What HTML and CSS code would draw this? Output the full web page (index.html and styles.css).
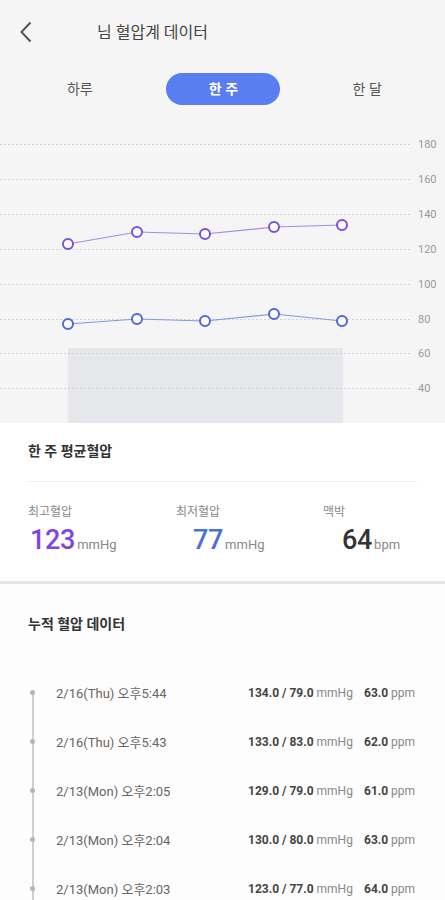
FILE: index.html
```html
<!DOCTYPE html>
<html lang="ko">
<head>
<meta charset="utf-8">
<title>혈압계 데이터</title>
<link rel="stylesheet" href="styles.css">
</head>
<body>
<div class="top">
  <header class="header">
    <svg class="back" width="14" height="22" viewBox="0 0 14 22"><path d="M11.5 1.5 L2.5 11 L11.5 20.5" fill="none" stroke="#555" stroke-width="2"/></svg>
    <h1 class="title">님 혈압계 데이터</h1>
  </header>
  <nav class="tabs">
    <span class="tab">하루</span>
    <span class="tab active">한 주</span>
    <span class="tab">한 달</span>
  </nav>
  <svg class="chart" width="445" height="303" viewBox="0 0 445 303">
    <rect x="68" y="228" width="275" height="75" fill="#e6e7ea"/>
    <g stroke="#c9c9c9" stroke-width="1" stroke-dasharray="1.5 2.5">
      <line x1="0" y1="24.5" x2="410" y2="24.5"/>
      <line x1="0" y1="59.5" x2="410" y2="59.5"/>
      <line x1="0" y1="94.5" x2="410" y2="94.5"/>
      <line x1="0" y1="129.5" x2="410" y2="129.5"/>
      <line x1="0" y1="164.5" x2="410" y2="164.5"/>
      <line x1="0" y1="199.5" x2="410" y2="199.5"/>
      <line x1="0" y1="233.5" x2="410" y2="233.5"/>
      <line x1="0" y1="268.5" x2="410" y2="268.5"/>
    </g>
    <g class="axis">
      <text x="418" y="28">180</text>
      <text x="418" y="63">160</text>
      <text x="418" y="98">140</text>
      <text x="418" y="133">120</text>
      <text x="418" y="168">100</text>
      <text x="418" y="203">80</text>
      <text x="418" y="237">60</text>
      <text x="418" y="272">40</text>
    </g>
    <polyline points="68,124 137,112 205,114 274,107 342,105" fill="none" stroke="#a78ae6" stroke-width="1.2"/>
    <g fill="#fff" stroke="#7b4fe0" stroke-width="2">
      <circle cx="68" cy="124" r="5"/>
      <circle cx="137" cy="112" r="5"/>
      <circle cx="205" cy="114" r="5"/>
      <circle cx="274" cy="107" r="5"/>
      <circle cx="342" cy="105" r="5"/>
    </g>
    <polyline points="68,204 137,199 205,201 274,194 342,201" fill="none" stroke="#8598e4" stroke-width="1.2"/>
    <g fill="#fff" stroke="#4e68d6" stroke-width="2">
      <circle cx="68" cy="204" r="5"/>
      <circle cx="137" cy="199" r="5"/>
      <circle cx="205" cy="201" r="5"/>
      <circle cx="274" cy="194" r="5"/>
      <circle cx="342" cy="201" r="5"/>
    </g>
  </svg>
</div>

<section class="card">
  <h2 class="card-title">한 주 평균혈압</h2>
  <div class="stats">
    <div class="stat">
      <div class="stat-label">최고혈압</div>
      <div class="stat-value v-high"><b>123</b><span>mmHg</span></div>
    </div>
    <div class="stat">
      <div class="stat-label">최저혈압</div>
      <div class="stat-value v-low"><b>77</b><span>mmHg</span></div>
    </div>
    <div class="stat">
      <div class="stat-label">맥박</div>
      <div class="stat-value v-pulse"><b>64</b><span>bpm</span></div>
    </div>
  </div>
</section>

<div class="sep"></div>

<section class="history">
  <h2 class="card-title">누적 혈압 데이터</h2>
  <ul class="list">
    <li class="row first">
      <span class="rail"><i></i></span>
      <span class="date">2/16(Thu) 오후5:44</span>
      <span class="bp"><b>134.0 / 79.0</b> mmHg</span>
      <span class="pulse"><b>63.0</b> ppm</span>
    </li>
    <li class="row">
      <span class="rail"><i></i></span>
      <span class="date">2/16(Thu) 오후5:43</span>
      <span class="bp"><b>133.0 / 83.0</b> mmHg</span>
      <span class="pulse"><b>62.0</b> ppm</span>
    </li>
    <li class="row">
      <span class="rail"><i></i></span>
      <span class="date">2/13(Mon) 오후2:05</span>
      <span class="bp"><b>129.0 / 79.0</b> mmHg</span>
      <span class="pulse"><b>61.0</b> ppm</span>
    </li>
    <li class="row">
      <span class="rail"><i></i></span>
      <span class="date">2/13(Mon) 오후2:04</span>
      <span class="bp"><b>130.0 / 80.0</b> mmHg</span>
      <span class="pulse"><b>63.0</b> ppm</span>
    </li>
    <li class="row">
      <span class="rail"><i></i></span>
      <span class="date">2/13(Mon) 오후2:03</span>
      <span class="bp"><b>123.0 / 77.0</b> mmHg</span>
      <span class="pulse"><b>64.0</b> ppm</span>
    </li>
  </ul>
</section>
</body>
</html>
```

FILE: styles.css
```css
* { box-sizing: border-box; }
html, body { margin: 0; padding: 0; }
body {
  width: 445px;
  height: 900px;
  overflow: hidden;
  background: #fdfdfd;
  font-family: Roboto, "Noto Sans CJK KR", sans-serif;
  color: #333;
}
.top { background: #f5f5f5; }
.header {
  height: 66px;
  display: flex;
  align-items: center;
  padding-left: 19px;
}
.back { display: block; margin-top: -2px; }
.title {
  margin: 0 0 0 64px;
  font-size: 16px;
  font-weight: 400;
  color: #444;
  line-height: 20px;
}
.tabs {
  margin-top: 7px;
  display: grid;
  grid-template-columns: 1fr 1fr 1fr;
  padding: 0 6px 0 8px;
  height: 32px;
  align-items: center;
  justify-items: center;
}
.tab {
  font-size: 14px;
  color: #555;
  line-height: 32px;
}
.tab.active {
  width: 114px;
  height: 32px;
  border-radius: 16px;
  background: #5a7df0;
  color: #fff;
  font-weight: 700;
  text-align: center;
}
.chart { display: block; margin-top: 15px; }
.axis text { font-size: 11px; fill: #9a9a9a; font-family: Roboto, sans-serif; }

.card {
  background: #fff;
  padding: 18px 28px 21px;
}
.card-title {
  margin: 0;
  font-size: 14px;
  font-weight: 700;
  color: #333;
  line-height: 20px;
}
.stats {
  margin-top: 20px;
  border-top: 1px solid #efefef;
  display: grid;
  grid-template-columns: 148px 147px 1fr;
  padding-top: 22px;
}
.stat-label { font-size: 12px; color: #888; line-height: 16px; }
.stat-value {
  margin-top: 5px;
  line-height: 30px;
  display: flex;
  align-items: baseline;
}
.stat-value b { font-size: 27px; font-weight: 500; letter-spacing: -0.3px; }
.stat-value span { font-size: 13px; color: #888; margin-left: 2px; }
.v-high { padding-left: 2px; }
.v-high b { color: #7d45e6; }
.v-low { padding-left: 17px; }
.v-low b { color: #4d6ee0; }
.v-pulse { padding-left: 19px; }
.v-pulse b { color: #333; }

.sep {
  height: 3px;
  background: #e4e4e4;
  box-shadow: 0 1px 3px rgba(0,0,0,0.06);
}
.history {
  background: #fdfdfd;
  padding: 30px 0 0 28px;
}
.list {
  list-style: none;
  margin: 34px 0 0;
  padding: 0;
}
.row {
  height: 49px;
  display: grid;
  grid-template-columns: 27px 192px 116px auto;
  align-items: center;
  margin-left: -28px;
  padding-left: 29px;
}
.rail {
  width: 7px;
  height: 49px;
  display: flex;
  align-items: center;
  justify-content: center;
  background: linear-gradient(90deg, transparent 2.5px, #cfcfcf 2.5px, #cfcfcf 4.5px, transparent 4.5px);
}
.row.first .rail {
  background: linear-gradient(90deg, transparent 2.5px, #cfcfcf 2.5px, #cfcfcf 4.5px, transparent 4.5px) no-repeat 0 22px / 7px 27px;
}
.rail i {
  display: block;
  width: 5px;
  height: 5px;
  border-radius: 50%;
  background: #b5b5b5;
}
.date {
  grid-column: 2;
  font-size: 13px;
  color: #666;
}
.bp, .pulse { font-size: 12px; color: #888; white-space: nowrap; }
.bp b, .pulse b { color: #444; font-weight: 700; }
```
